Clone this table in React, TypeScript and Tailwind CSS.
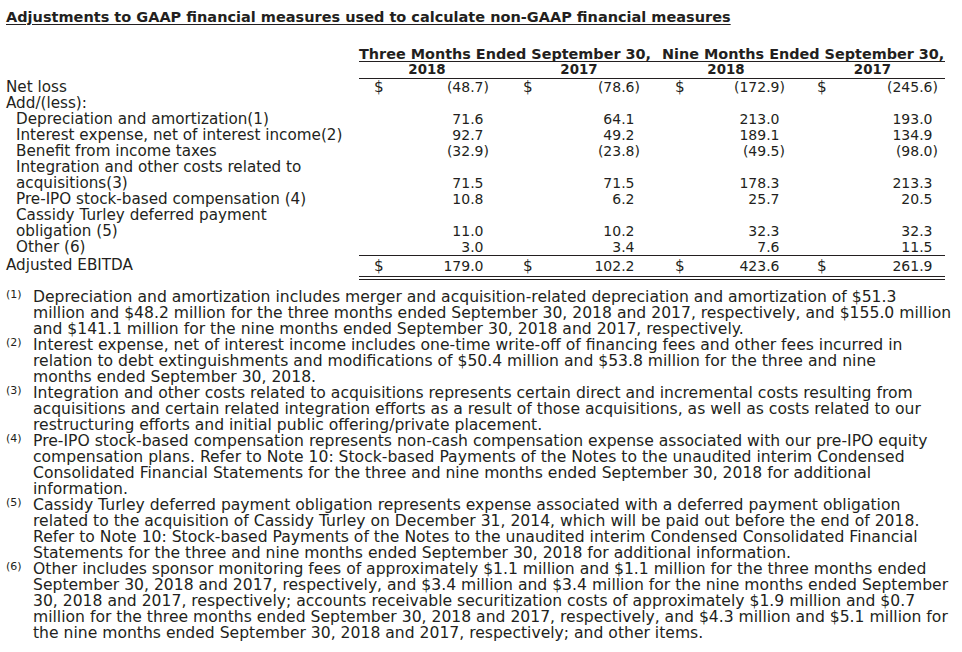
const valuePad = ['pl-[15px] pr-[6px]', 'pl-[15px] pr-[10px]', 'pl-[13px] pr-[5px]', 'pl-[17px] pr-[7px]']

type RowProps = {
  label: string
  indent?: boolean
  values?: string[]
  dollar?: boolean
  line?: string
  total?: boolean
}

function Num({ v }: { v: string }) {
  return (
    <span className="text-[14px]">
      {v}
      {!v.endsWith(')') && <span className="invisible">)</span>}
    </span>
  )
}

function Row({ label, indent, values, dollar, line = '', total }: RowProps) {
  const align = total ? 'items-start pt-[2px]' : 'items-center'
  const cells = []
  for (let i = 0; i < 4; i++) {
    cells.push(
      <div key={'v' + i} className={`flex justify-between ${align} ${valuePad[i]} ${line}`}>
        <span>{dollar ? '$' : ''}</span>
        {values ? <Num v={values[i]} /> : <span />}
      </div>,
    )
    if (i < 3) cells.push(<div key={'s' + i} className={line} />)
  }
  return (
    <>
      <div
        className={`flex whitespace-nowrap ${align} ${total ? 'h-[25px]' : 'h-4'} ${indent ? 'pl-[10px]' : ''}`}
      >
        {label}
      </div>
      {cells}
    </>
  )
}

const notes = [
  [
    'Depreciation and amortization includes merger and acquisition-related depreciation and amortization of $51.3',
    'million and $48.2 million for the three months ended September 30, 2018 and 2017, respectively, and $155.0 million',
    'and $141.1 million for the nine months ended September 30, 2018 and 2017, respectively.',
  ],
  [
    'Interest expense, net of interest income includes one-time write-off of financing fees and other fees incurred in',
    'relation to debt extinguishments and modifications of $50.4 million and $53.8 million for the three and nine',
    'months ended September 30, 2018.',
  ],
  [
    'Integration and other costs related to acquisitions represents certain direct and incremental costs resulting from',
    'acquisitions and certain related integration efforts as a result of those acquisitions, as well as costs related to our',
    'restructuring efforts and initial public offering/private placement.',
  ],
  [
    'Pre-IPO stock-based compensation represents non-cash compensation expense associated with our pre-IPO equity',
    'compensation plans. Refer to Note 10: Stock-based Payments of the Notes to the unaudited interim Condensed',
    'Consolidated Financial Statements for the three and nine months ended September 30, 2018 for additional',
    'information.',
  ],
  [
    'Cassidy Turley deferred payment obligation represents expense associated with a deferred payment obligation',
    'related to the acquisition of Cassidy Turley on December 31, 2014, which will be paid out before the end of 2018.',
    'Refer to Note 10: Stock-based Payments of the Notes to the unaudited interim Condensed Consolidated Financial',
    'Statements for the three and nine months ended September 30, 2018 for additional information.',
  ],
  [
    'Other includes sponsor monitoring fees of approximately $1.1 million and $1.1 million for the three months ended',
    'September 30, 2018 and 2017, respectively, and $3.4 million and $3.4 million for the nine months ended September',
    '30, 2018 and 2017, respectively; accounts receivable securitization costs of approximately $1.9 million and $0.7',
    'million for the three months ended September 30, 2018 and 2017, respectively, and $4.3 million and $5.1 million for',
    'the nine months ended September 30, 2018 and 2017, respectively; and other items.',
  ],
]

export default function App() {
  return (
    <div className="h-[652px] w-[962px] overflow-hidden bg-white pl-[6px] pt-[8px] font-['DejaVu_Sans',sans-serif] text-[15.2px] leading-4 text-[#231f20]">
      <h1 className="h-[18px] whitespace-nowrap text-[14.5px] font-bold leading-[18px] underline underline-offset-2">
        Adjustments to GAAP financial measures used to calculate non-GAAP financial measures
      </h1>

      <div className="mt-[20px] grid grid-cols-[353px_136px_13px_142px_12px_128px_10px_145px]">
        <div />
        <div className="col-span-3 h-4 whitespace-nowrap border-b border-[#231f20] text-[14.4px] font-bold leading-4">
          Three Months Ended September 30,
        </div>
        <div className="border-b border-[#231f20]" />
        <div className="col-span-3 h-4 whitespace-nowrap border-b border-[#231f20] text-[14.4px] font-bold leading-4">
          Nine Months Ended September 30,
        </div>

        <div />
        <div className="h-[17px] border-b border-[#231f20] text-center text-[13.4px] font-bold">2018</div>
        <div className="border-b border-[#231f20]" />
        <div className="border-b border-[#231f20] text-center text-[13.4px] font-bold">2017</div>
        <div className="border-b border-[#231f20]" />
        <div className="border-b border-[#231f20] text-center text-[13.4px] font-bold">2018</div>
        <div className="border-b border-[#231f20]" />
        <div className="border-b border-[#231f20] text-center text-[13.4px] font-bold">2017</div>

        <Row label="Net loss" dollar values={['(48.7)', '(78.6)', '(172.9)', '(245.6)']} />
        <Row label="Add/(less):" />
        <Row indent label="Depreciation and amortization(1)" values={['71.6', '64.1', '213.0', '193.0']} />
        <Row indent label="Interest expense, net of interest income(2)" values={['92.7', '49.2', '189.1', '134.9']} />
        <Row indent label="Benefit from income taxes" values={['(32.9)', '(23.8)', '(49.5)', '(98.0)']} />
        <Row indent label="Integration and other costs related to" />
        <Row indent label="acquisitions(3)" values={['71.5', '71.5', '178.3', '213.3']} />
        <Row indent label="Pre-IPO stock-based compensation (4)" values={['10.8', '6.2', '25.7', '20.5']} />
        <Row indent label="Cassidy Turley deferred payment" />
        <Row indent label="obligation (5)" values={['11.0', '10.2', '32.3', '32.3']} />
        <Row indent label="Other (6)" values={['3.0', '3.4', '7.6', '11.5']} />
        <Row
          label="Adjusted EBITDA"
          dollar
          total
          line="border-t border-b-[4px] border-double border-t-[#231f20] border-b-[#231f20]"
          values={['179.0', '102.2', '423.6', '261.9']}
        />
      </div>

      <div className="mt-[9px] flex flex-col text-[15.6px]">
        {notes.map((lines, i) => (
          <div key={i} className="flex">
            <div className="w-[27px] shrink-0 text-[11px] leading-3">({i + 1})</div>
            <div className="flex flex-col">
              {lines.map((l) => (
                <div key={l} className="h-4 whitespace-nowrap">
                  {l}
                </div>
              ))}
            </div>
          </div>
        ))}
      </div>
    </div>
  )
}
